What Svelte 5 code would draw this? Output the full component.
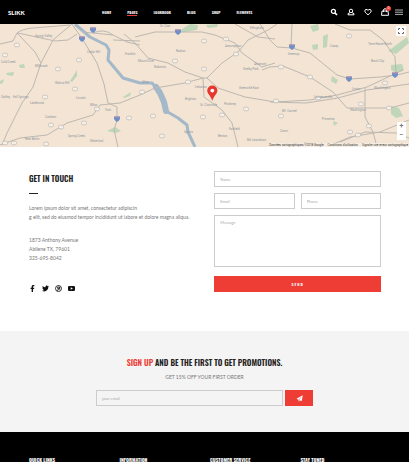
<script lang="ts">
  const nav = ["Home", "Pages", "Lookbook", "Blog", "Shop", "Elements"];
  const active = "Pages";
  const footerColumns = ["Quick Links", "Information", "Customer Service", "Stay Tuned"];
  const cartCount = 0;

  const roads = [
    "M0 20L13 17L17 9Q22 5 33 4L70 1",
    "M2 121L7 109L22 79L33 63L41 39L53 16L72 0",
    "M17 9L35 28L41 39",
    "M18 9L55 17L68 16L77 10",
    "M72 0L83 16L97 39L104 60L108 79L117 83L117 96L114 106L118 123",
    "M0 121L20 114L47 111L67 99L93 91L100 81L120 79L140 71L155 64L185 59L203 54",
    "M82 8L93 9L113 11L127 18L140 21",
    "M93 9Q104 4 113 11",
    "M113 16L140 17",
    "M135 13L155 8L202 8L215 11L235 19L242 29L262 43L275 39",
    "M124 10L135 19L148 34L168 39L185 48L203 54",
    "M203 54L207 54L222 39L238 28L248 16L268 6L277 0",
    "M235 0L258 13L275 15",
    "M203 54L204 73L222 86L232 99L238 123",
    "M207 54L218 64L245 73L275 78L310 76L337 71L367 63L403 46",
    "M292 0L291 23",
    "M260 0L270 16L277 23L292 24L310 29L337 51L350 55L380 53L397 51L409 48",
    "M262 46L270 43L283 42L310 53L333 68L347 84L390 84L409 79",
    "M270 78L306 79L338 74L367 66L409 60",
    "M335 0L350 6L370 6L383 16L395 33L396 49",
    "M365 64L365 93L373 108L377 123",
    "M327 123L350 113L380 108L409 96",
    "M340 118L365 108L396 109L409 114",
  ];
  const parks = [
    "M70 57L77 46L77 52L72 58Z",
    "M178 8L190 0L198 1L197 6L184 8Z",
    "M206 1L218 0L217 3L208 4Z",
    "M310 2L318 0L319 6L313 8Z",
    "M323 12L328 10L327 23L323 24Z",
    "M312 21L318 20L318 25L313 26Z",
    "M391 41L402 40L404 46L396 49L391 46Z",
    "M388 27L407 13L409 19L396 30Z",
    "M332 52L338 56L336 60L331 57Z",
    "M391 82L399 84L403 92L396 94L391 90Z",
    "M107 107L115 103L121 107L116 109Z",
    "M19 41L24 40L25 44L20 44Z",
    "M6 49L14 48L13 52L7 51Z",
    "M123 73L131 68L130 72L124 74Z",
    "M0 57L4 55L3 59L0 60Z",
    "M333 97L338 99L334 102Z",
  ];
  const places: [number, number, string][] = [
    [35, 13, "Spring Valley"],
    [1, 39, "Cold Creek"],
    [35, 43, "Millbrook"],
    [55, 60, "Walnut Hill"],
    [1, 74, "Oakley"],
    [13, 74, "Fall Springs"],
    [30, 80, "Lakebrook"],
    [45, 94, "Carleton"],
    [76, 75, "Lincoln"],
    [90, 82, "Milan"],
    [105, 87, "York"],
    [25, 116, "New Berlin"],
    [68, 113, "Spring Creek"],
    [90, 118, "Waterford"],
    [87, 29, "Cedar Hill"],
    [125, 31, "Franklin"],
    [160, 3, "St. Clair"],
    [176, 28, "Radnor"],
    [138, 38, "Mount Olive"],
    [154, 44, "Nokomis"],
    [142, 59, "Alton"],
    [195, 64, "Lebanon"],
    [185, 76, "Brighton"],
    [200, 82, "St. Clairsville"],
    [224, 81, "Pinckney"],
    [239, 65, "Greenville East"],
    [254, 41, "Altamont"],
    [243, 46, "Shelby Park"],
    [225, 23, "Assumption"],
    [250, 5, "Effingham"],
    [184, 109, "Sparta"],
    [229, 106, "Fairfield"],
    [218, 113, "Benton"],
    [247, 117, "Mc Leansboro"],
    [288, 31, "Greenup"],
    [330, 23, "Casey"],
    [368, 21, "Terre Haute North"],
    [371, 38, "Brazil City"],
    [352, 66, "Linton"],
    [374, 65, "Worthington"],
    [314, 74, "Lawrenceville"],
    [350, 87, "Washington"],
    [282, 88, "Mt. Carmel"],
    [322, 96, "Princeton"],
    [280, 108, "Carmi"],
  ];
  const interstates = [[82, 15], [93, 6], [117, 95], [178, 8], [292, 23], [349, 55], [395, 51]];
  const routes = [
    [17, 21], [79, 36], [5, 31], [58, 45], [75, 65], [45, 73], [51, 101], [61, 103], [97, 85],
    [84, 99], [129, 94], [14, 119], [5, 119], [46, 120], [142, 68], [188, 58], [175, 37],
    [204, 17], [204, 45], [226, 15], [236, 30], [153, 92], [203, 93], [222, 91], [162, 112],
    [246, 85], [281, 43], [310, 53], [276, 77], [318, 74], [389, 84], [385, 59], [361, 80],
    [349, 12], [369, 102], [350, 108], [358, 111], [281, 92],
  ];
</script>

<div class="page">
  <header>
    <a class="logo" href="/">SLIKK</a>
    <nav>
      {#each nav as item}
        <a href="/" class:active={item === active}>{item}</a>
      {/each}
    </nav>
    <div class="tools">
      <button aria-label="Search">
        <svg viewBox="0 0 8 8"><circle cx="3.4" cy="3.4" r="2" stroke-width="1.3" /><path d="M5 5L7 7" stroke-width="1.7" /></svg>
      </button>
      <button aria-label="Account">
        <svg viewBox="0 0 8 8"><circle cx="4" cy="2.9" r="1.7" /><path d="M3.1 4.6L1 5.6V6.8H7V5.6L4.9 4.6" /></svg>
      </button>
      <button aria-label="Wishlist">
        <svg viewBox="0 0 8 8"><path d="M4 6.8C2.2 5.4.8 4.3.8 2.9C.8 1.2 3 .8 4 2.4C5 .8 7.2 1.2 7.2 2.9C7.2 4.3 5.8 5.4 4 6.8Z" /></svg>
      </button>
      <button class="cart" aria-label="Cart">
        <svg viewBox="0 0 8 8"><path d="M1 3H7L7.5 7.3H.5ZM2.5 4V2.3Q2.5.7 4 .7T5.5 2.3V4" /></svg>
        <span class="badge">{cartCount}</span>
      </button>
      <button aria-label="Menu">
        <svg viewBox="0 0 8 8"><path d="M0 2H8M0 4.2H8M0 6.4H8" stroke-width=".7" /></svg>
      </button>
    </div>
  </header>

  <section class="map" aria-label="Map">
    <svg class="canvas" viewBox="0 0 409 123" preserveAspectRatio="xMidYMid slice">
      {#each parks as d}
        <path class="park" {d} />
      {/each}
      <path class="river" d="M75 0L90 13L106 21L109 26L108 36L123 54L140 59L152 59L158 66" />
      <path class="river wide" d="M156 63L160 69L164 78L166 87" />
      <path class="river" d="M166 87L178 94L187 101L188 108L195 123" />
      {#each roads as d}
        <path class="road" {d} />
      {/each}
      {#each routes as [x, y]}
        <rect class="route" x={x - 2.5} y={y - 1.8} width="5" height="3.6" rx="1.4" />
      {/each}
      {#each interstates as [x, y]}
        <path class="shield" d="M{x - 3} {y - 2.5}H{x + 3}V{y}Q{x + 2} {y + 2} {x} {y + 3}Q{x - 2} {y + 2} {x - 3} {y}Z" />
        <path class="shield-top" d="M{x - 2.5} {y - 2}H{x + 2.5}" />
      {/each}
      {#each places as [x, y, name]}
        <text {x} {y}>{name}</text>
      {/each}
      <path class="pin" d="M212.3 77C211 72 207.2 69.8 207.2 66.5A5.1 5.1 0 0 1 217.4 66.5C217.4 69.8 213.6 72 212.3 77Z" />
      <circle cx="212.3" cy="66.6" r="1.9" fill="#fff" />
    </svg>
    <button class="fullscreen" aria-label="Full screen">
      <svg viewBox="0 0 6 6"><path d="M.5 2V.5H2M4 .5H5.5V2M5.5 4V5.5H4M2 5.5H.5V4" /></svg>
    </button>
    <div class="zoom">
      <button aria-label="Zoom in">+</button>
      <button aria-label="Zoom out">−</button>
    </div>
    <div class="credits">
      <span>Données cartographiques ©2018 Google</span>
      <a href="/">Conditions d'utilisation</a>
      <a href="/">Signaler une erreur cartographique</a>
    </div>
  </section>

  <main>
    <section class="intro">
      <h1>Get in touch</h1>
      <hr />
      <p>Lorem ipsum dolor sit amet, consectetur adipiscin<br />g elit, sed do eiusmod tempor incididunt ut labore et dolore magna aliqua.</p>
      <address>1873 Anthony Avenue<br />Abilene TX, 79601<br />325-695-8042</address>
      <div class="social">
        <a href="/" aria-label="Facebook">
          <svg viewBox="0 0 8 8"><path d="M3 8V4.5H1.8V3.1H3V2.1C3 .8 3.8.1 5 .1H6.1V1.4H5.3Q4.6 1.4 4.6 2.1V3.1H6L5.8 4.5H4.6V8Z" /></svg>
        </a>
        <a href="/" aria-label="Twitter">
          <svg viewBox="0 0 8 8"><path d="M8 1.6L7.2 2.4C7.3 5.2 5.2 7.3 2.6 7.3Q1.1 7.3 0 6.5Q1.4 6.6 2.4 5.8Q1.3 5.7.9 4.7H1.6Q.4 4.2.4 3L1.1 3.2Q.1 2.2.7 1.1Q2 2.6 4 2.7C3.6.8 5.7.1 6.7 1.3L7.7.9L7.1 1.8Z" /></svg>
        </a>
        <a href="/" aria-label="Pinterest">
          <svg viewBox="0 0 8 8"><circle cx="4" cy="4" r="3.4" fill="none" stroke="#111" /><path d="M2.8 4.7C1.7 3.3 2.7 1.7 4.3 1.7C6.6 1.7 6.5 5.1 4.7 5.2L4 5L3.2 7.3L2.6 7L3.6 3.2H4.4L4.1 4.3C5.2 4.6 5.3 2.6 4.2 2.5C3.1 2.5 2.8 3.5 3.2 4.1Z" /></svg>
        </a>
        <a href="/" aria-label="YouTube">
          <svg viewBox="0 0 8 8"><path fill-rule="evenodd" d="M1.3 1.1H6.7Q8 1.1 8 2.4V5.6Q8 6.9 6.7 6.9H1.3Q0 6.9 0 5.6V2.4Q0 1.1 1.3 1.1ZM3.1 2.5V5.5L5.6 4Z" /></svg>
        </a>
      </div>
    </section>

    <form class="contact">
      <input type="text" placeholder="Name" aria-label="Name" />
      <div class="pair">
        <input type="email" placeholder="Email" aria-label="Email" />
        <input type="tel" placeholder="Phone" aria-label="Phone" />
      </div>
      <textarea placeholder="Message" aria-label="Message"></textarea>
      <button class="send" type="button">Send</button>
    </form>
  </main>

  <section class="signup">
    <h2><em>Sign up</em> and be the first to get promotions.</h2>
    <p>GET 15% OFF YOUR FIRST ORDER</p>
    <form>
      <input type="email" placeholder="your email" aria-label="Your email" />
      <button type="button" aria-label="Subscribe">
        <svg viewBox="0 0 8 8"><path fill-rule="evenodd" d="M7.8.3L6.5 7L4.2 5.9L3 7.6V5.4L.5 4.3ZM6.5 1.7L3.4 5L4 5.3Z" /></svg>
      </button>
    </form>
  </section>

  <footer>
    {#each footerColumns as title}
      <h3>{title}</h3>
    {/each}
  </footer>
</div>

<style>
  :global(body) {
    background: #fff;
  }

  .page {
    --narrow: Oswald, "Liberation Sans Narrow", "Open Sans Condensed", "Roboto Condensed", "Liberation Sans", sans-serif;
    --red: #ee3d35;
    display: flex;
    flex-direction: column;
    min-height: 100vh;
    font-family: Lato, sans-serif;
    font-size: 5px;
    color: #777;
  }

  .page * {
    box-sizing: border-box;
  }

  h1, h2, h3, p, address, hr {
    margin: 0;
    font-style: normal;
  }

  h1, h2, h3 {
    font-family: var(--narrow);
    font-weight: 600;
    text-transform: uppercase;
  }

  a {
    color: inherit;
    text-decoration: none;
  }

  button {
    margin: 0;
    padding: 0;
    border: 0;
    background: none;
    color: inherit;
  }

  svg {
    display: block;
  }

  header {
    display: grid;
    grid-template-columns: 94px 1fr auto;
    align-items: center;
    height: 24px;
    padding: 0 6px 0 8px;
    background: #000;
    color: #fff;
  }

  .logo {
    font: 900 6px Lato, sans-serif;
  }

  nav {
    display: flex;
    gap: 16px;
    font: 600 4px/6px var(--narrow);
    text-transform: uppercase;
  }

  nav .active {
    border-bottom: 1px solid var(--red);
    margin-bottom: -1px;
  }

  .tools {
    display: flex;
    gap: 9px;
  }

  .tools svg {
    width: 8px;
    height: 8px;
    fill: none;
    stroke: #fff;
  }

  .cart {
    position: relative;
  }

  .tools button:last-child {
    margin-left: -3px;
  }

  .badge {
    position: absolute;
    top: -2px;
    right: -2px;
    width: 5px;
    border-radius: 50%;
    background: var(--red);
    font: 3px/5px Lato, sans-serif;
  }

  .map {
    position: relative;
    height: 123px;
    background: #f3e4d3;
  }

  .canvas {
    width: 100%;
    height: 100%;
  }

  .canvas text {
    font: 3px Roboto, sans-serif;
    fill: #8e969d;
  }

  .park {
    fill: #bfd6b8;
  }

  .road,
  .river {
    fill: none;
    stroke: #bdb8b2;
    stroke-width: 1;
    stroke-linejoin: round;
  }

  .river {
    stroke: #a3b9c9;
    stroke-width: 3;
  }

  .wide {
    stroke-width: 6;
    stroke-linecap: round;
  }

  .route {
    fill: #f7efe3;
    stroke: #a5a8ae;
    stroke-width: 0.5;
  }

  .shield {
    fill: #6f8fc8;
  }

  .shield-top {
    stroke: #b98ba0;
  }

  .pin {
    fill: #e8352e;
  }

  .fullscreen,
  .zoom {
    position: absolute;
    right: 3px;
    background: #fff;
  }

  .fullscreen {
    top: 2px;
    padding: 2px;
  }

  .fullscreen svg {
    width: 6px;
    height: 6px;
    fill: none;
    stroke: #666;
  }

  .zoom {
    bottom: 7px;
    display: grid;
    width: 9px;
  }

  .zoom button {
    height: 9px;
    font: 700 7px/9px Roboto, sans-serif;
  }

  .credits {
    position: absolute;
    right: 0;
    bottom: 0;
    display: flex;
    gap: 4px;
    padding-right: 1px;
    background: #f5ede1;
    font: 3px/4px Roboto, sans-serif;
    color: #333;
  }

  main {
    display: grid;
    grid-template-columns: 10fr 9fr;
    padding: 24px 28px 39px 29px;
  }

  h1 {
    padding-top: 2px;
    font-size: 8px;
    line-height: 10px;
    color: #222;
  }

  hr {
    width: 9px;
    height: 1px;
    margin: 10px 0;
    border: 0;
    background: #222;
  }

  .intro p,
  address {
    line-height: 9px;
    white-space: nowrap;
  }

  address {
    margin-top: 14px;
  }

  .social {
    display: flex;
    gap: 6px;
    margin-top: 22px;
  }

  .social svg {
    width: 7px;
    height: 7px;
    fill: #111;
  }

  input,
  textarea {
    display: block;
    width: 100%;
    min-width: 0;
    height: 16px;
    margin: 0;
    padding: 0 5px;
    border: 1px solid #ccc;
    border-radius: 0;
    background: transparent;
    font: 4px Lato, sans-serif;
  }

  ::placeholder {
    color: #aaa;
  }

  .contact {
    display: grid;
    gap: 6px;
    align-content: start;
  }

  .pair {
    display: grid;
    grid-template-columns: 1fr 1fr;
    gap: 6px;
  }

  textarea {
    height: 52px;
    padding: 4px 5px;
    resize: none;
  }

  .send {
    height: 16px;
    margin-top: 3px;
    background: var(--red);
    font: 600 4px var(--narrow);
    letter-spacing: 1px;
    text-transform: uppercase;
    color: #fff;
  }

  .signup {
    display: flex;
    flex-direction: column;
    align-items: center;
    padding: 26px 29px;
    background: #f4f4f4;
  }

  h2 {
    font-size: 8px;
    line-height: 10px;
    color: #222;
  }

  h2 em {
    font-style: normal;
    color: var(--red);
  }

  .signup p {
    margin: 6px 0 8px;
    line-height: 9px;
  }

  .signup form {
    display: grid;
    grid-template-columns: 1fr 28px;
    gap: 2px;
    width: 62%;
  }

  .signup button {
    display: grid;
    place-items: center;
    background: var(--red);
  }

  .signup button svg {
    width: 7px;
    height: 7px;
    fill: #fff;
  }

  footer {
    flex: 1;
    display: grid;
    grid-template-columns: repeat(4, 1fr);
    padding: 25px 18px 0 29px;
    background: #000;
    color: #fff;
  }

  h3 {
    font-size: 5px;
    font-weight: 700;
    line-height: 5px;
  }
</style>
